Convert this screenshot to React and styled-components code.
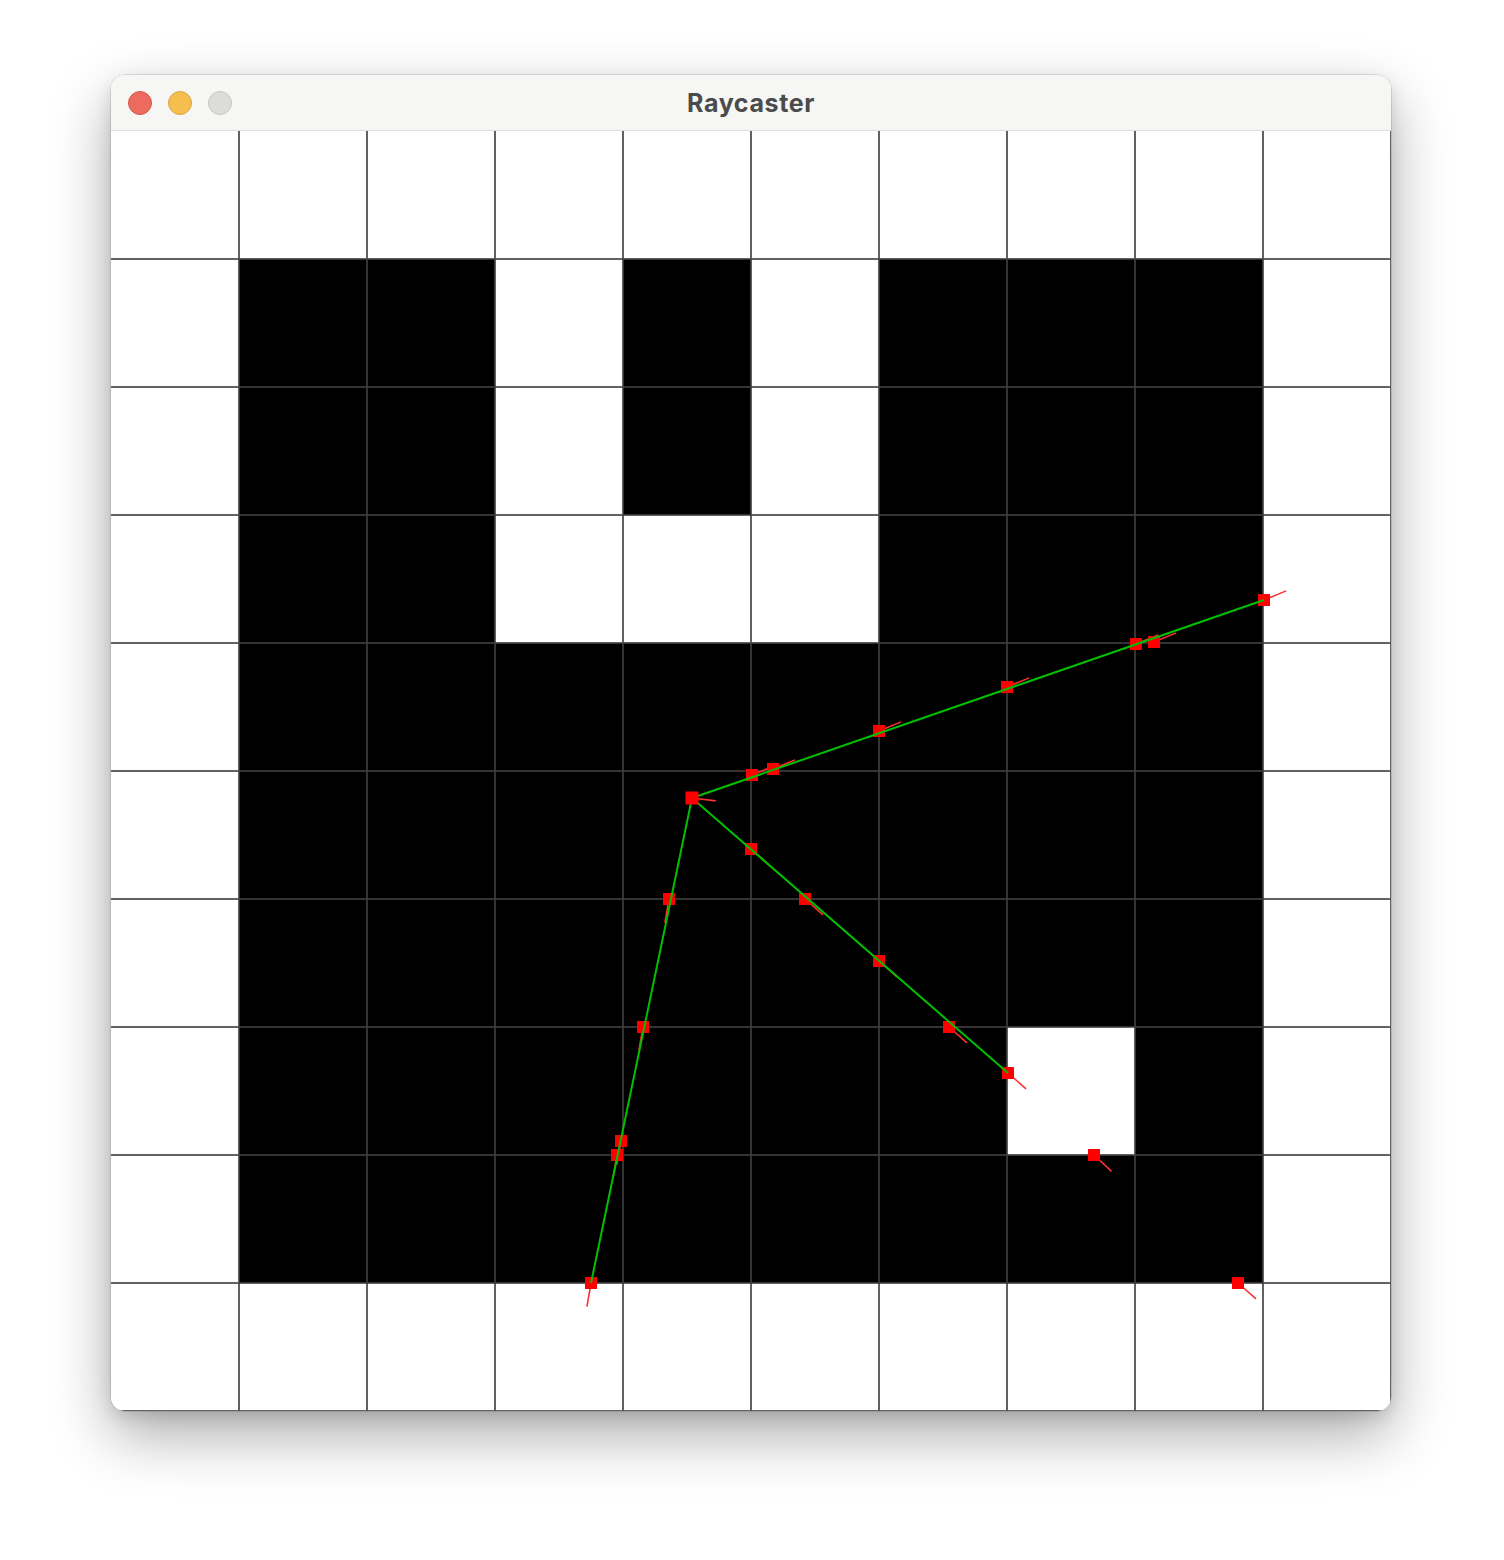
import styled, { createGlobalStyle } from "styled-components";

const GlobalStyle = createGlobalStyle`
  html, body {
    margin: 0;
    padding: 0;
    background: #ffffff;
  }
`;

const MAP = [
  "0000000000",
  "0110101110",
  "0110101110",
  "0110001110",
  "0111111110",
  "0111111110",
  "0111111110",
  "0111111010",
  "0111111110",
  "0000000000",
];

const PLAYER = [581, 667];

const RAYS = [
  {
    end: [1153, 469],
    hits: [[641, 644], [662, 638], [768, 600], [896, 556], [1025, 513], [1043, 511], [1153, 469]],
    dir: [0.92, -0.38],
  },
  {
    end: [897, 942],
    hits: [[640, 718], [694, 768], [768, 830], [838, 896], [897, 942]],
    dir: [0.75, 0.66],
  },
  {
    end: [480, 1152],
    hits: [[558, 768], [532, 896], [510, 1010], [506, 1024], [480, 1152]],
    dir: [-0.17, 0.985],
  },
];

// stray hit marks without a traced line
const EXTRA = [
  { at: [983, 1024], dir: [0.73, 0.68] },
  { at: [1127, 1152], dir: [0.75, 0.66] },
];

const Desktop = styled.div`
  width: 1504px;
  height: 1560px;
  padding: 75px 0 0 111px;
  box-sizing: border-box;
`;

const Window = styled.div`
  width: 1280px;
  border-radius: 14px;
  overflow: hidden;
  background: #ffffff;
  box-shadow: 0 0 0 0.5px rgba(0, 0, 0, 0.2), 0 24px 60px rgba(0, 0, 0, 0.33),
    0 6px 16px rgba(0, 0, 0, 0.12);
`;

const TitleBar = styled.div`
  height: 56px;
  position: relative;
  display: flex;
  align-items: center;
  justify-content: center;
  background: #f6f6f4;
  box-shadow: inset 0 -1px 0 #dedede;
`;

const Lights = styled.div`
  position: absolute;
  left: 17px;
  top: 16px;
  display: flex;
  gap: 16px;
`;

const Light = styled.span`
  width: 22px;
  height: 22px;
  border-radius: 50%;
  background: ${({ $color }) => $color};
  border: 1px solid ${({ $edge }) => $edge};
`;

const Title = styled.div`
  font-family: Inter, "Open Sans", "Liberation Sans", sans-serif;
  font-weight: 700;
  font-size: 25px;
  color: #4b4b4b;
  letter-spacing: 0.6px;
`;

const Board = styled.div`
  position: relative;
  width: 1280px;
  height: 1280px;
  display: grid;
  grid-template-columns: repeat(10, 128px);
  grid-template-rows: repeat(10, 128px);
`;

const Cell = styled.div`
  background: ${({ $wall }) => ($wall ? "#000000" : "#ffffff")};
  box-shadow: inset -1px -1px 0 rgba(64, 64, 64, 0.82)
    ${({ $top }) => (!$top ? ", inset 0 1px 0 rgba(64, 64, 64, 0.82)" : "")}
    ${({ $left }) => (!$left ? ", inset 1px 0 0 rgba(64, 64, 64, 0.82)" : "")};
`;

const Overlay = styled.svg`
  position: absolute;
  inset: 0;
  pointer-events: none;
`;

function Tick({ at, dir, len = 24 }) {
  return (
    <line
      x1={at[0]}
      y1={at[1]}
      x2={at[0] + dir[0] * len}
      y2={at[1] + dir[1] * len}
      stroke="#ff3030"
      strokeWidth="1.6"
    />
  );
}

function Mark({ at, size = 12 }) {
  return (
    <rect
      x={at[0] - size / 2}
      y={at[1] - size / 2}
      width={size}
      height={size}
      fill="#ff0000"
    />
  );
}

export default function App() {
  return (
    <Desktop>
      <GlobalStyle />
      <Window>
        <TitleBar>
          <Lights>
            <Light $color="#ec6a5e" $edge="#d5594e" />
            <Light $color="#f5bf4f" $edge="#d9a444" />
            <Light $color="#dcdcdb" $edge="#c6c6c5" />
          </Lights>
          <Title>Raycaster</Title>
        </TitleBar>
        <Board>
          {MAP.map((row, r) =>
            row
              .split("")
              .map((v, c) => (
                <Cell key={`${r}-${c}`} $wall={v === "1"} $top={r === 0} $left={c === 0} />
              ))
          )}
          <Overlay width="1280" height="1280" viewBox="0 0 1280 1280">
            {RAYS.map((ray, i) =>
              ray.hits.map((h, j) => <Tick key={`t${i}-${j}`} at={h} dir={ray.dir} />)
            )}
            {EXTRA.map((e, i) => (
              <Tick key={`et${i}`} at={e.at} dir={e.dir} />
            ))}
            <Tick at={PLAYER} dir={[0.99, 0.12]} len={24} />
            {RAYS.map((ray, i) => ray.hits.map((h, j) => <Mark key={`m${i}-${j}`} at={h} />))}
            {EXTRA.map((e, i) => (
              <Mark key={`em${i}`} at={e.at} />
            ))}
            {RAYS.map((ray, i) => (
              <line
                key={`r${i}`}
                x1={PLAYER[0]}
                y1={PLAYER[1]}
                x2={ray.end[0]}
                y2={ray.end[1]}
                stroke="#00c000"
                strokeWidth="2"
              />
            ))}
            <Mark at={PLAYER} size={13} />
          </Overlay>
        </Board>
      </Window>
    </Desktop>
  );
}
